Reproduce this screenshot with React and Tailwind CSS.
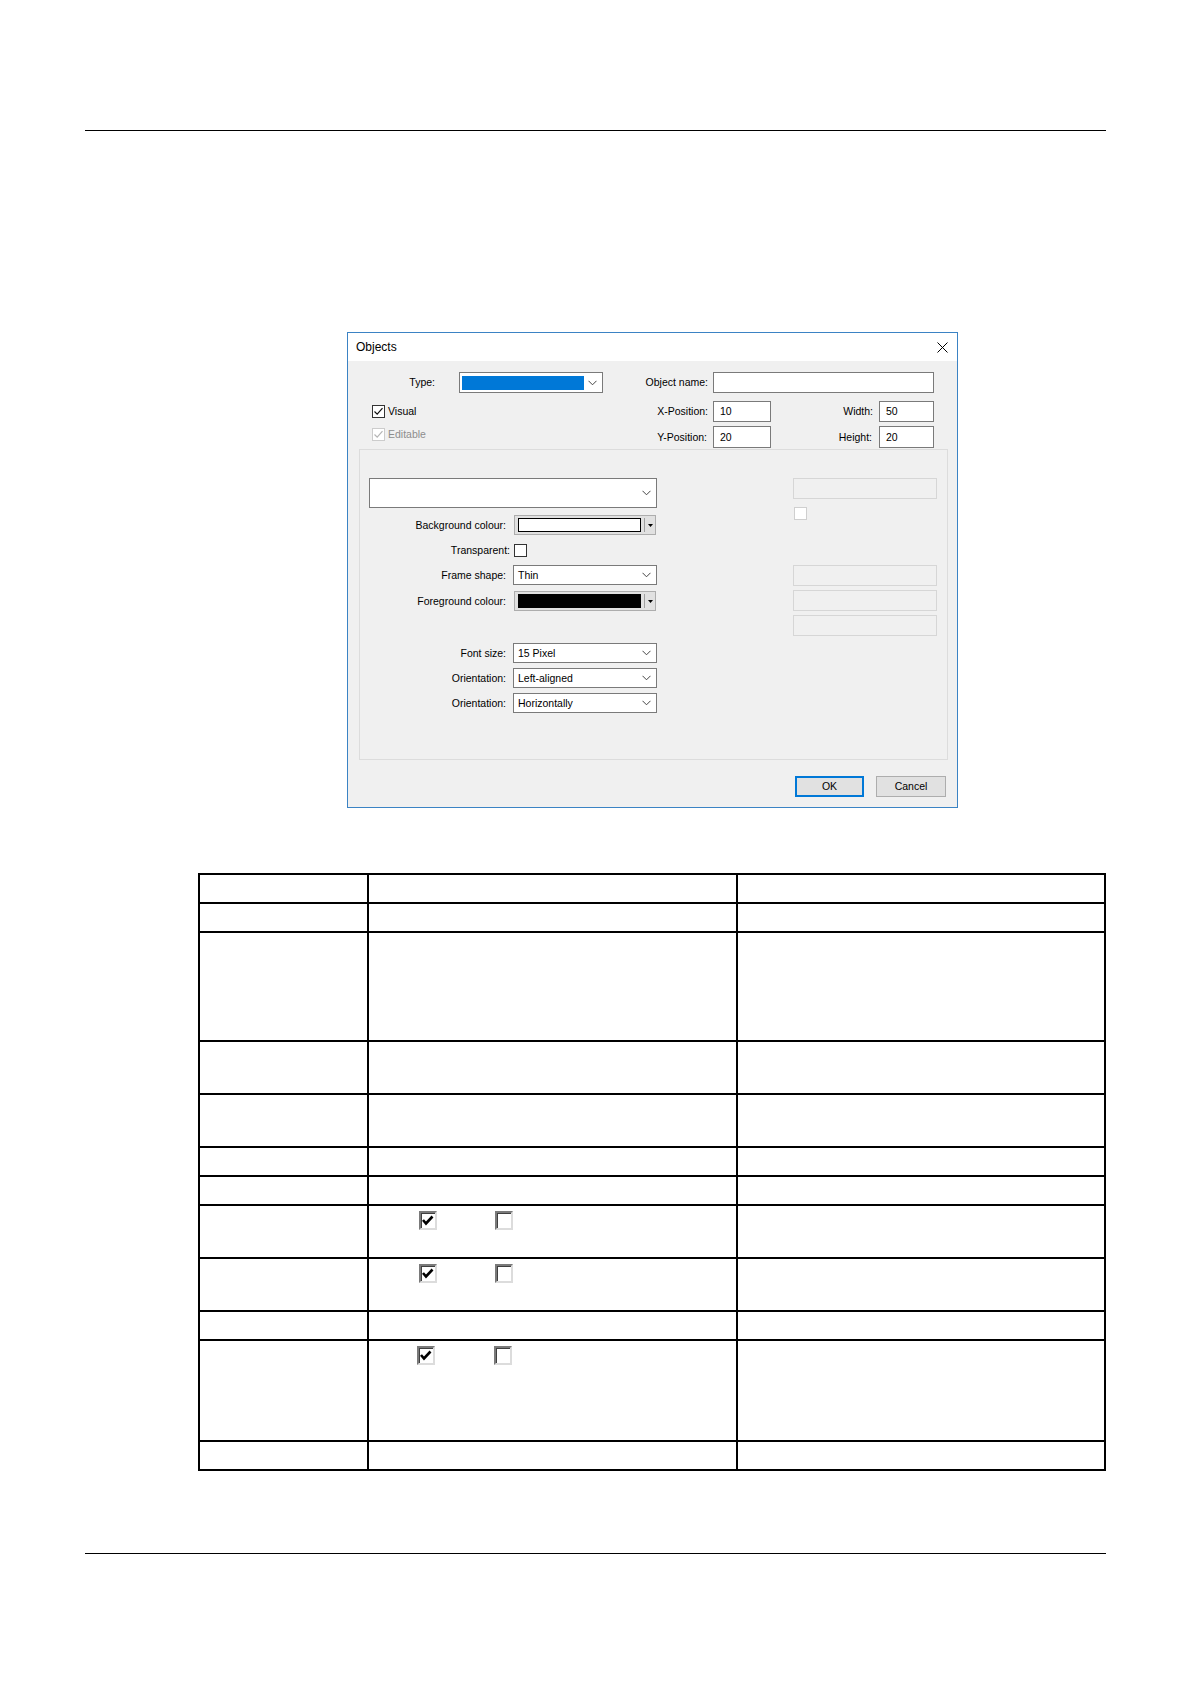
const ui = "font-['Liberation_Sans',Arial,sans-serif]";

function Chevron() {
  return (
    <svg width="9" height="6" viewBox="0 0 9 6" className="shrink-0">
      <path d="M0.5 0.8 L4.5 4.8 L8.5 0.8" fill="none" stroke="#444" strokeWidth="1" />
    </svg>
  );
}

function Select({ value, className = "" }) {
  return (
    <div className={`flex h-[20px] w-[144px] items-center justify-between border border-[#7a7a7a] bg-white pl-[4px] pr-[5px] text-[10.5px] leading-none ${className}`}>
      <span>{value}</span>
      <Chevron />
    </div>
  );
}

function ColourPicker({ fill }) {
  return (
    <div className="ml-[1px] flex h-[20px] w-[142px] items-stretch border border-[#adadad] bg-[#e1e1e1] py-[2px] pl-[3px]">
      <div className={`w-[123px] border border-black ${fill}`} />
      <div className="ml-[3px] w-px bg-[#a0a0a0]" />
      <div className="flex flex-1 items-center justify-center">
        <svg width="5" height="3" viewBox="0 0 5 3">
          <path d="M0 0 H5 L2.5 3 Z" fill="#000" />
        </svg>
      </div>
    </div>
  );
}

function WinCheck({ checked, disabled }) {
  return (
    <div className={`flex h-[13px] w-[13px] shrink-0 items-center justify-center border bg-white ${disabled ? "border-[#cccccc]" : "border-[#333333]"}`}>
      {checked && (
        <svg width="11" height="11" viewBox="0 0 11 11">
          <path d="M1.5 5.5 L4.2 8.2 L9.5 2.2" fill="none" stroke={disabled ? "#b5b5b5" : "#111"} strokeWidth="1.2" />
        </svg>
      )}
    </div>
  );
}

function TextBox({ value, w }) {
  return (
    <div className={`flex h-full items-center border border-[#7a7a7a] bg-white pl-[6px] text-[10.5px] leading-none ${w}`}>
      {value}
    </div>
  );
}

function DisabledBox() {
  return <div className="h-[21px] w-[144px] border border-[#d6d6d6] bg-[#f0f0f0]" />;
}

function ClassicCheck({ checked }) {
  return (
    <div className="flex h-[19px] w-[18px] items-center justify-center border-2 border-t-[#7a7a7a] border-l-[#7a7a7a] border-b-[#dcdcdc] border-r-[#dcdcdc] bg-white shadow-[inset_1px_1px_0_#404040]">
      {checked && (
        <svg width="12" height="11" viewBox="0 0 12 11">
          <path d="M1 5 L4 8.5 L10.5 1.5" fill="none" stroke="#000" strokeWidth="2.6" />
        </svg>
      )}
    </div>
  );
}

function Dialog() {
  return (
    <div className={`ml-[347px] mt-[201px] flex h-[476px] w-[611px] flex-col border border-[#3b83c4] ${ui}`}>
      <div className="flex h-[28px] items-center justify-between bg-white pl-[8px] pr-[9px]">
        <span className="text-[12px] text-black">Objects</span>
        <svg width="11" height="11" viewBox="0 0 11 11">
          <path d="M0.5 0.5 L10.5 10.5 M10.5 0.5 L0.5 10.5" stroke="#000" strokeWidth="1" />
        </svg>
      </div>
      <div className="flex-1 bg-[#f0f0f0] pt-[11px] text-[10.5px] leading-none text-black">
        <div className="flex h-[21px] items-center">
          <div className="w-[111px] pr-[24px] text-right">Type:</div>
          <div className="flex h-[21px] w-[144px] items-center justify-between border border-[#7a7a7a] bg-white pl-[2px] pr-[5px]">
            <div className="h-[14px] w-[122px] bg-[#0078d7]" />
            <Chevron />
          </div>
          <div className="w-[110px] pr-[5px] text-right">Object name:</div>
          <TextBox value="" w="w-[221px]" />
        </div>
        <div className="mt-[8px] flex h-[21px] items-center">
          <div className="flex w-[255px] items-center gap-[3px] pl-[24px]">
            <WinCheck checked />
            <span>Visual</span>
          </div>
          <div className="w-[110px] pr-[5px] text-right">X-Position:</div>
          <TextBox value="10" w="w-[58px]" />
          <div className="w-[108px] pr-[6px] text-right">Width:</div>
          <TextBox value="50" w="w-[55px]" />
        </div>
        <div className="mt-[4px] flex h-[22px] items-center">
          <div className="flex w-[255px] items-center gap-[3px] self-start pl-[24px] pt-[2px] text-[#8d8d8d]">
            <WinCheck checked disabled />
            <span>Editable</span>
          </div>
          <div className="w-[110px] pr-[6px] text-right">Y-Position:</div>
          <TextBox value="20" w="w-[58px]" />
          <div className="w-[108px] pr-[7px] text-right">Height:</div>
          <TextBox value="20" w="w-[55px]" />
        </div>

        <div className="ml-[11px] mt-[1px] flex h-[311px] w-[589px] border border-[#dcdcdc]">
          <div className="ml-[9px] w-[288px] pt-[28px]">
            <div className="flex h-[30px] w-[288px] items-center justify-end border border-[#7a7a7a] bg-white pr-[5px]">
              <Chevron />
            </div>
            <div className="mt-[7px] flex h-[20px] items-center">
              <div className="w-[144px] pr-[7px] text-right">Background colour:</div>
              <ColourPicker fill="bg-white" />
            </div>
            <div className="mt-[9px] flex h-[13px] items-center">
              <div className="w-[145px] pr-[4px] text-right">Transparent:</div>
              <WinCheck />
            </div>
            <div className="mt-[8px] flex h-[20px] items-center">
              <div className="w-[144px] pr-[7px] text-right">Frame shape:</div>
              <Select value="Thin" />
            </div>
            <div className="mt-[6px] flex h-[20px] items-center">
              <div className="w-[144px] pr-[7px] text-right">Foreground colour:</div>
              <ColourPicker fill="bg-black" />
            </div>
            <div className="mt-[32px] flex h-[20px] items-center">
              <div className="w-[144px] pr-[7px] text-right">Font size:</div>
              <Select value="15 Pixel" />
            </div>
            <div className="mt-[5px] flex h-[20px] items-center">
              <div className="w-[144px] pr-[7px] text-right">Orientation:</div>
              <Select value="Left-aligned" />
            </div>
            <div className="mt-[5px] flex h-[20px] items-center">
              <div className="w-[144px] pr-[7px] text-right">Orientation:</div>
              <Select value="Horizontally" />
            </div>
          </div>
          <div className="ml-[136px] w-[144px] pt-[28px]">
            <DisabledBox />
            <div className="ml-[1px] mt-[8px] h-[13px] w-[13px] border border-[#cfcfcf] bg-white" />
            <div className="mt-[45px]">
              <DisabledBox />
            </div>
            <div className="mt-[4px]">
              <DisabledBox />
            </div>
            <div className="mt-[4px]">
              <DisabledBox />
            </div>
          </div>
        </div>

        <div className="mt-[16px] flex justify-end gap-[12px] pr-[11px]">
          <div className="flex h-[21px] w-[69px] items-center justify-center border-2 border-[#0078d7] bg-[#e1e1e1]">OK</div>
          <div className="flex h-[21px] w-[70px] items-center justify-center border border-[#adadad] bg-[#e1e1e1]">Cancel</div>
        </div>
      </div>
    </div>
  );
}

const rows = [
  { h: "h-[29px]" },
  { h: "h-[29px]" },
  { h: "h-[109px]" },
  { h: "h-[53px]" },
  { h: "h-[53px]" },
  { h: "h-[29px]" },
  { h: "h-[29px]" },
  { h: "h-[53px]", checks: "pl-[50px] gap-[58px]" },
  { h: "h-[53px]", checks: "pl-[50px] gap-[58px]" },
  { h: "h-[29px]" },
  { h: "h-[101px]", checks: "pl-[48px] gap-[59px]" },
  { h: "h-[29px]" },
];

function ParamTable() {
  return (
    <div className="ml-[198px] mt-[65px] w-[908px] border-l-2 border-t-2 border-black">
      {rows.map((r, i) => (
        <div key={i} className={`grid grid-cols-[169px_369px_368px] ${r.h}`}>
          <div className="border-b-2 border-r-2 border-black" />
          <div className="border-b-2 border-r-2 border-black">
            {r.checks && (
              <div className={`flex pt-[5px] ${r.checks}`}>
                <ClassicCheck checked />
                <ClassicCheck />
              </div>
            )}
          </div>
          <div className="border-b-2 border-r-2 border-black" />
        </div>
      ))}
    </div>
  );
}

export default function App() {
  return (
    <div className="min-h-[1684px] w-[1190px] bg-white pt-[130px]">
      <div className="ml-[85px] h-px w-[1021px] bg-black" />
      <Dialog />
      <ParamTable />
      <div className="ml-[85px] mt-[82px] h-px w-[1021px] bg-black" />
    </div>
  );
}
